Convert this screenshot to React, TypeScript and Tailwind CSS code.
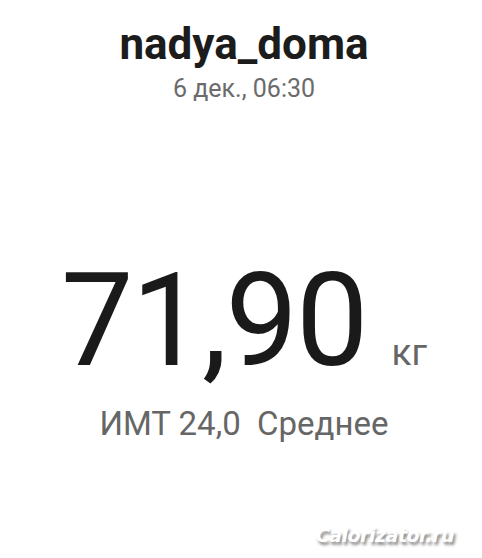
import React from 'react';

const Watermark = () => (
  <div
    className="absolute right-[28px] bottom-[9px] text-[19px] font-black italic text-white tracking-tight [text-shadow:2px_3px_3px_rgba(0,0,0,0.45)]"
    style={{ fontFamily: '"DejaVu Sans", sans-serif' }}
  >
    Calorizator.ru
  </div>
);

export default function App() {
  return (
    <div
      className="relative w-[482px] h-[558px] bg-white overflow-hidden flex flex-col items-center pl-[6px]"
      style={{ fontFamily: 'Roboto, "Noto Sans", sans-serif' }}
    >
      <div className="pt-[22px] text-[44px] leading-none font-bold text-[#1c1c1c]">nadya_doma</div>
      <div className="mt-[10px] text-[25px] leading-none text-[#6b6b6b]">6 дек., 06:30</div>

      <div className="mt-[155px] flex items-baseline">
        <span className="text-[129px] leading-none font-normal tracking-[-2px] text-[#1a1a1a]">71,90</span>
        <span className="ml-[25px] text-[37px] leading-none text-[#666666]">кг</span>
      </div>

      <div className="mt-[22px] text-[33px] leading-none text-[#666666] whitespace-pre">ИМТ 24,0  Среднее</div>

      <Watermark />
    </div>
  );
}
